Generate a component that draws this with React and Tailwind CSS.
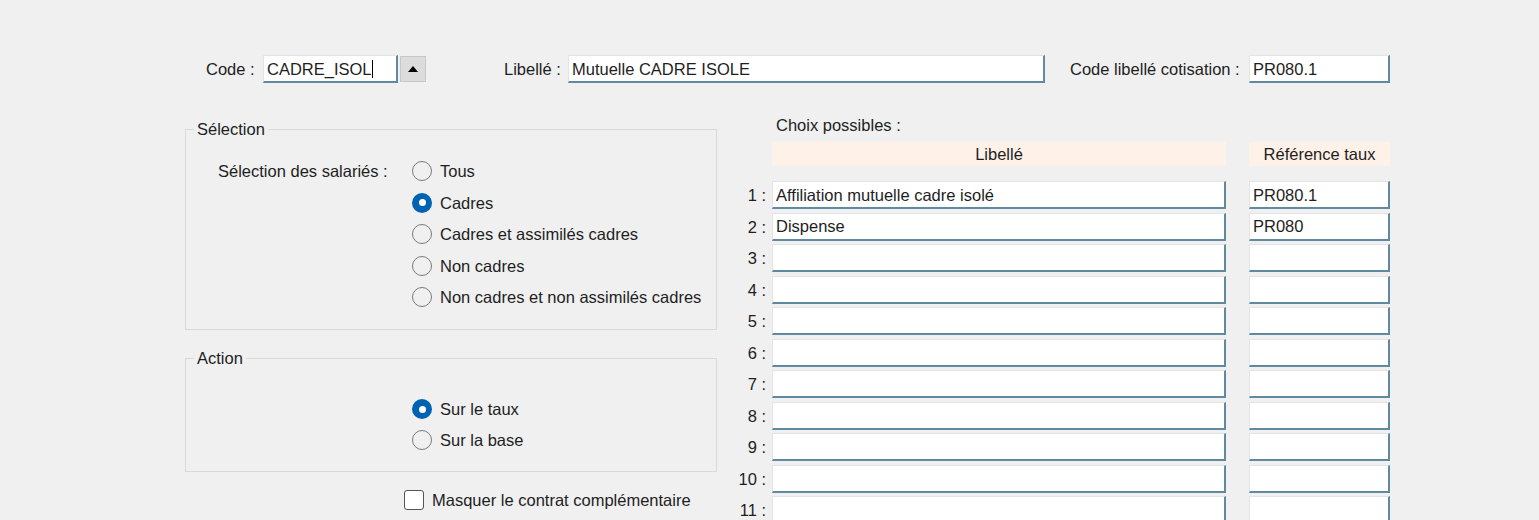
const field = "bg-white border-t border-l border-t-[#e4e4e4] border-l-[#e4e4e4] border-b-2 border-r-2 border-b-[#5f8aa0] border-r-[#5f8aa0]";

const Radio = ({ checked, label }) => (
  <div className="flex items-center h-6">
    {checked ? (
      <span className="w-5 h-5 rounded-full bg-[#0063b1] flex items-center justify-center">
        <span className="w-[7px] h-[7px] rounded-full bg-white" />
      </span>
    ) : (
      <span className="w-5 h-5 rounded-full border-[1.5px] border-[#7a7a7a] bg-transparent" />
    )}
    <span className="ml-2">{label}</span>
  </div>
);

const rows = [
  { lib: "Affiliation mutuelle cadre isolé", ref: "PR080.1" },
  { lib: "Dispense", ref: "PR080" },
  { lib: "", ref: "" },
  { lib: "", ref: "" },
  { lib: "", ref: "" },
  { lib: "", ref: "" },
  { lib: "", ref: "" },
  { lib: "", ref: "" },
  { lib: "", ref: "" },
  { lib: "", ref: "" },
  { lib: "", ref: "" },
];

const App = () => {
  return (
    <div
      className="w-[1539px] h-[520px] overflow-hidden bg-[#f0f0f0] text-[16.5px] text-[#1e1e1e] leading-5"
      style={{ fontFamily: '"Liberation Sans", Arial, sans-serif' }}
    >
      {/* top row */}
      <div className="flex items-center h-[28px] mt-[55px] pl-[206px]">
        <span className="w-[57px]">Code :</span>
        <div className={`${field} w-[135px] h-[28px] pl-[3px] flex items-center`}>
          <span>CADRE_ISOL</span>
          <span className="w-px h-[18px] bg-black" />
        </div>
        <div className="ml-[2px] w-[26px] h-[26px] bg-[#dcdcdc] border border-[#c8c8c8] flex items-center justify-center">
          <span className="w-0 h-0 border-l-[5px] border-r-[5px] border-b-[6px] border-l-transparent border-r-transparent border-b-black" />
        </div>
        <span className="ml-[78px] w-[64px]">Libellé :</span>
        <div className={`${field} w-[477px] h-[28px] pl-[3px] flex items-center`}>Mutuelle CADRE ISOLE</div>
        <span className="ml-[25px] w-[179px]">Code libellé cotisation :</span>
        <div className={`${field} w-[141px] h-[28px] pl-[3px] flex items-center`}>PR080.1</div>
      </div>

      <div className="flex mt-[32px] pl-[185px]">
        {/* left column */}
        <div className="w-[532px] mt-[4px]">
          <fieldset className="border border-[#d9d9d9]">
            <legend className="ml-[8px] px-[3px]">Sélection</legend>
            <div className="flex pl-[32px] pt-[20px] pb-[20px]">
              <div className="w-[194px] h-6 flex items-center">Sélection des salariés :</div>
              <div className="flex flex-col gap-[7.5px]">
                <Radio label="Tous" />
                <Radio checked label="Cadres" />
                <Radio label="Cadres et assimilés cadres" />
                <Radio label="Non cadres" />
                <Radio label="Non cadres et non assimilés cadres" />
              </div>
            </div>
          </fieldset>

          <fieldset className="mt-[18px] border border-[#d9d9d9]">
            <legend className="ml-[8px] px-[3px]">Action</legend>
            <div className="flex flex-col gap-[7px] pl-[226px] pt-[29px] pb-[19px]">
              <Radio checked label="Sur le taux" />
              <Radio label="Sur la base" />
            </div>
          </fieldset>

          <div className="flex items-center h-6 mt-[16px] ml-[219px]">
            <span className="w-5 h-5 rounded-[3px] border-[1.5px] border-[#555] bg-white" />
            <span className="ml-2">Masquer le contrat complémentaire</span>
          </div>
        </div>

        {/* right column */}
        <div className="ml-[17px]">
          <div className="pl-[42px] h-5">Choix possibles :</div>
          <div className="flex mt-[7px] ml-[38px] h-6">
            <div className="w-[454px] bg-[#fdf1e8] flex items-center justify-center">Libellé</div>
            <div className="w-[141px] ml-[23px] bg-[#fdf1e8] flex items-center justify-center">Référence taux</div>
          </div>
          <div className="flex flex-col gap-[3.5px] mt-[15px]">
            {rows.map((r, i) => (
              <div key={i} className="flex items-center h-[28px]">
                <span className="w-[32px] text-right">{i + 1} :</span>
                <div className={`${field} ml-[6px] w-[454px] h-[28px] pl-[3px] flex items-center`}>{r.lib}</div>
                <div className={`${field} ml-[23px] w-[141px] h-[28px] pl-[3px] flex items-center`}>{r.ref}</div>
              </div>
            ))}
          </div>
        </div>
      </div>
    </div>
  );
};

export default App;
